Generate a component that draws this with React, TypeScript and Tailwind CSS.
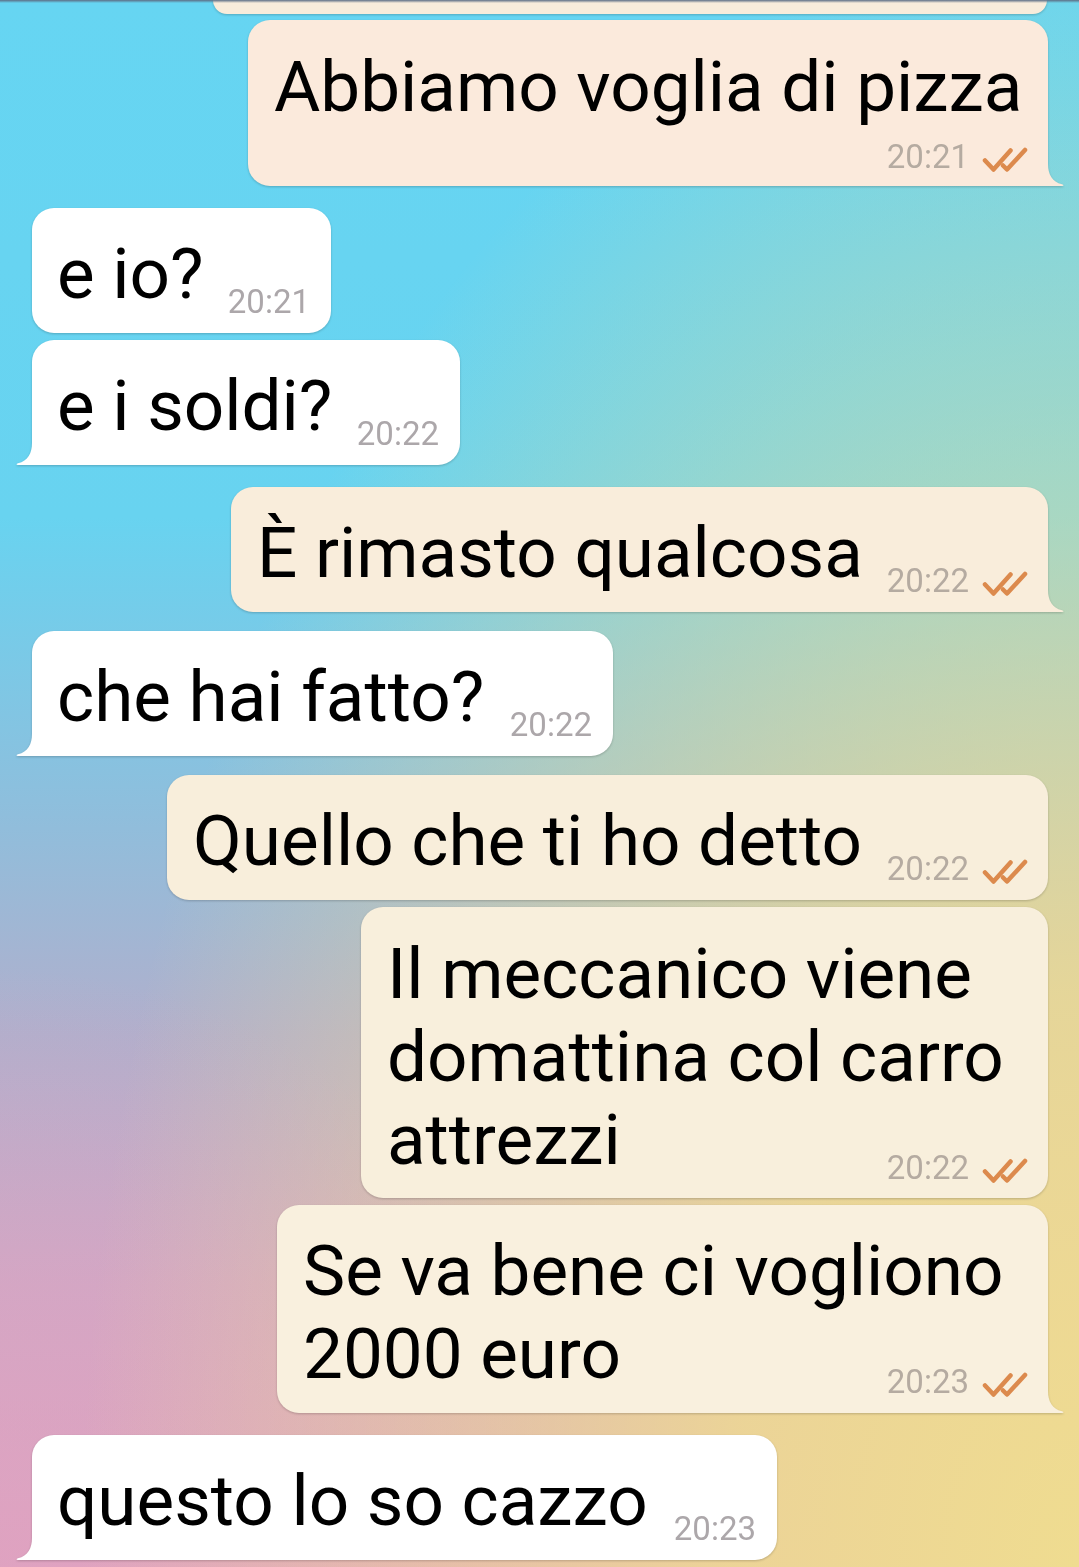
import React from "react";

type Msg = {
  out: boolean;
  lines: string[];
  time: string;
  w: string;
  mt: string;
  kind: "inline" | "stacked";
  tail: boolean;
  bg: string;
  fill: string;
  pad: string;
};

const msgs: Msg[] = [
  { out: true, lines: ["Abbiamo voglia di pizza"], time: "20:21", w: "w-[800px]", mt: "mt-[6px]", kind: "stacked", tail: true, bg: "bg-[#fbeadc]", fill: "#fbeadc", pad: "pt-[25px] pb-[13px]" },
  { out: false, lines: ["e io?"], time: "20:21", w: "w-[299px]", mt: "mt-[22px]", kind: "inline", tail: false, bg: "bg-white", fill: "#ffffff", pad: "pt-[24px] pb-[15px]" },
  { out: false, lines: ["e i soldi?"], time: "20:22", w: "w-[428px]", mt: "mt-[7px]", kind: "inline", tail: true, bg: "bg-white", fill: "#ffffff", pad: "pt-[24px] pb-[15px]" },
  { out: true, lines: ["È rimasto qualcosa"], time: "20:22", w: "w-[817px]", mt: "mt-[22px]", kind: "inline", tail: true, bg: "bg-[#f9eddb]", fill: "#f9eddb", pad: "pt-[24px] pb-[15px]" },
  { out: false, lines: ["che hai fatto?"], time: "20:22", w: "w-[581px]", mt: "mt-[19px]", kind: "inline", tail: true, bg: "bg-white", fill: "#ffffff", pad: "pt-[24px] pb-[15px]" },
  { out: true, lines: ["Quello che ti ho detto"], time: "20:22", w: "w-[881px]", mt: "mt-[19px]", kind: "inline", tail: false, bg: "bg-[#f8eedb]", fill: "#f8eedb", pad: "pt-[24px] pb-[15px]" },
  { out: true, lines: ["Il meccanico viene", "domattina col carro", "attrezzi"], time: "20:22", w: "w-[687px]", mt: "mt-[7px]", kind: "inline", tail: false, bg: "bg-[#f8efdc]", fill: "#f8efdc", pad: "pt-[25px] pb-[14px]" },
  { out: true, lines: ["Se va bene ci vogliono", "2000 euro"], time: "20:23", w: "w-[771px]", mt: "mt-[7px]", kind: "inline", tail: true, bg: "bg-[#f9f0de]", fill: "#f9f0de", pad: "pt-[24px] pb-[15px]" },
  { out: false, lines: ["questo lo so cazzo"], time: "20:23", w: "w-[745px]", mt: "mt-[22px]", kind: "inline", tail: true, bg: "bg-white", fill: "#ffffff", pad: "pt-[24px] pb-[15px]" },
];

function Checks() {
  return (
    <svg width="46" height="26" viewBox="0 0 46 26" className="ml-[13px] shrink-0" fill="none">
      <path d="M3 13.5 L11.5 22.5 L28.5 3.5" stroke="#dc8a4d" strokeWidth="4.5" strokeLinecap="round" strokeLinejoin="round" />
      <path d="M21 18.5 L25 22.5 L43 3" stroke="#dc8a4d" strokeWidth="4.5" strokeLinecap="round" strokeLinejoin="round" />
    </svg>
  );
}

function Meta({ m }: { m: Msg }) {
  return (
    <div className="flex items-end shrink-0">
      <span className={`text-[33px] leading-[32px] ${m.out ? "text-[#b5aba1]" : "text-[#aca7aa]"}`}>{m.time}</span>
      {m.out && <Checks />}
    </div>
  );
}

function Bubble({ m }: { m: Msg }) {
  const corner = m.tail ? (m.out ? "rounded-br-none" : "rounded-bl-none") : "";
  const padX = m.out ? "pl-[26px] pr-[20px]" : "pl-[25px] pr-[21px]";
  const head = m.lines.slice(0, -1);
  const last = m.lines[m.lines.length - 1];
  let body: React.ReactNode;
  if (m.kind === "inline") {
    body = (
      <div className="flex flex-col">
        {head.map((l, i) => (
          <div key={i} className="text-[71px] leading-[83px] whitespace-nowrap">
            {l}
          </div>
        ))}
        <div className="flex items-end justify-between">
          <div className="text-[71px] leading-[83px] mb-[3px] whitespace-nowrap">{last}</div>
          <Meta m={m} />
        </div>
      </div>
    );
  } else {
    body = (
      <div className="flex flex-col">
        <div className="text-[71px] leading-[83px] whitespace-nowrap">{last}</div>
        <div className="flex justify-end mt-[13px]">
          <Meta m={m} />
        </div>
      </div>
    );
  }
  return (
    <div className={`flex ${m.out ? "justify-end pr-[31px]" : "justify-start pl-[32px]"} ${m.mt}`}>
      <div className="relative drop-shadow-[0_1px_1px_rgba(0,0,0,0.2)]">
        <div className={`${m.w} ${m.bg} ${m.pad} ${padX} rounded-[22px] ${corner} text-black`}>{body}</div>
        {m.tail && m.out && (
          <svg width="17" height="22" viewBox="0 0 17 22" className="absolute bottom-0 right-[-16px]">
            <path d="M0 0 L1 0 C1 10 5 18 15 20.3 C17 20.8 17 22 15 22 L0 22 Z" fill={m.fill} />
          </svg>
        )}
        {m.tail && !m.out && (
          <svg width="17" height="22" viewBox="0 0 17 22" className="absolute bottom-0 left-[-16px]">
            <path d="M17 0 L16 0 C16 10 12 18 2 20.3 C0 20.8 0 22 2 22 L17 22 Z" fill={m.fill} />
          </svg>
        )}
      </div>
    </div>
  );
}

export default function App() {
  return (
    <div className="relative w-[1079px] h-[1567px] overflow-hidden font-[family-name:Roboto,sans-serif] bg-[radial-gradient(ellipse_1000px_1650px_at_100%_100%,#efdc90_0%,rgba(239,220,144,0.85)_35%,rgba(239,220,144,0)_100%),radial-gradient(circle_at_0%_100%,rgba(224,162,193,0.6)_0px,rgba(224,162,193,0)_600px),linear-gradient(to_bottom,#66d5f2_0%,#68d3f0_33%,#8fbedc_52%,#b1afcc_66%,#cfa8c5_82%,#dea3c0_100%)]">
      <div className="flex flex-col">
        <div className="flex justify-end pr-[32px]">
          <div className="w-[834px] h-[14px] bg-[#f8ecdb] rounded-b-[22px] drop-shadow-[0_1px_1px_rgba(0,0,0,0.2)]" />
        </div>
        {msgs.map((m, i) => (
          <Bubble key={i} m={m} />
        ))}
      </div>
      <div className="absolute top-0 left-0 right-0 h-[3px] bg-gradient-to-b from-[#5d6f86] to-transparent" />
    </div>
  );
}
